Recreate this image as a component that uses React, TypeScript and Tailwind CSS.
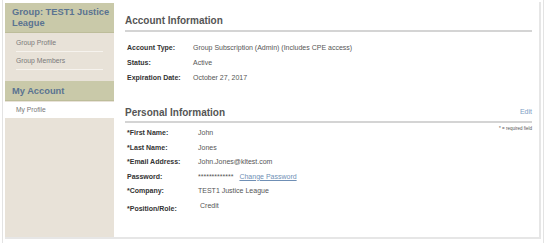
export default function App() {
	const account = [
		{ label: "Account Type:", value: "Group Subscription (Admin) (Includes CPE access)" },
		{ label: "Status:", value: "Active" },
		{ label: "Expiration Date:", value: "October 27, 2017" },
	];

	const personal = [
		{ label: "*First Name:", value: "John" },
		{ label: "*Last Name:", value: "Jones" },
		{ label: "*Email Address:", value: "John.Jones@kltest.com" },
	];

	return (
		<div className="flex h-[243px] w-[546px] overflow-hidden bg-white font-['Liberation_Sans',Arial,sans-serif]">
			<div className="ml-[2px] w-[542px] border-x border-[#e3e3e3] px-[2px] pt-[2px]">
				<div className="flex h-[237px] border-b-2 border-r-2 border-[#e6e6e6]">
					{/* sidebar */}
					<div className="mt-[1px] flex w-[109px] flex-col bg-[#e8e2d8]">
						<div className="border-b border-[#bdbd9a] bg-[#c9c9a9] pb-[3px] pl-[7px] pt-[4px] text-[9.3px] font-bold leading-[11px] text-[#5a7391]">
							Group: TEST1 Justice League
						</div>
						<div className="pt-[1px]">
							<div className="mx-[11px] border-b border-[#f6f3ee] pb-[3px] pt-[4px] text-[6.8px] leading-[10px] text-[#7a7a7a]">
								Group Profile
							</div>
							<div className="mx-[11px] border-b border-[#f6f3ee] pb-[3px] pt-[4px] text-[6.8px] leading-[10px] text-[#7a7a7a]">
								Group Members
							</div>
						</div>
						<div className="mt-[11px] border-b border-[#bdbd9a] bg-[#c9c9a9] pb-[3px] pl-[7px] pt-[4px] text-[9.3px] font-bold leading-[12px] text-[#5a7391]">
							My Account
						</div>
						<div className="mt-[1px] h-[16px] bg-white pl-[11px] text-[6.7px] leading-[16px] text-[#777]">
							My Profile
						</div>
					</div>

					{/* main */}
					<div className="flex-1 pl-[11px] pr-[7px] pt-[13px]">
						<h2 className="border-b-2 border-[#d4d4d4] pb-[3px] text-[10px] font-bold leading-[12px] text-[#555]">
							Account Information
						</h2>
						<div className="mt-[8px] pl-[2px]">
							{account.map((row) => (
								<div key={row.label} className="flex text-[7px] leading-[15px]">
									<span className="w-[66px] font-bold text-[#333]">{row.label}</span>
									<span className="text-[#555]">{row.value}</span>
								</div>
							))}
						</div>

						<div className="mt-[22px] flex items-end justify-between border-b-2 border-[#d4d4d4] pb-[2px]">
							<h2 className="text-[10px] font-bold leading-[12px] text-[#555]">Personal Information</h2>
							<a className="mb-[3px] text-[7px] leading-[8px] text-[#7c9cc4]">Edit</a>
						</div>
						<div className="relative mt-[3px] pl-[2px]">
							<span className="absolute right-0 top-[0px] text-[4.5px] leading-[6px] text-[#555]">
								* = required field
							</span>
							{personal.map((row) => (
								<div key={row.label} className="flex text-[7px] leading-[14.5px]">
									<span className="w-[71px] font-bold text-[#333]">{row.label}</span>
									<span className="text-[#555]">{row.value}</span>
								</div>
							))}
							<div className="flex text-[7px] leading-[14.5px]">
								<span className="w-[71px] font-bold text-[#333]">Password:</span>
								<span className="text-[#555]">*************</span>
								<a className="ml-[6px] text-[#6f8fb5] underline">Change Password</a>
							</div>
							<div className="flex text-[7px] leading-[14.5px]">
								<span className="w-[71px] font-bold text-[#333]">*Company:</span>
								<span className="text-[#555]">TEST1 Justice League</span>
							</div>
							<div className="flex text-[7px] leading-[14.5px]">
								<span className="w-[73px] pt-[3px] font-bold text-[#333]">*Position/Role:</span>
								<span className="text-[#555]">Credit</span>
							</div>
						</div>
					</div>
				</div>
			</div>
		</div>
	);
}
